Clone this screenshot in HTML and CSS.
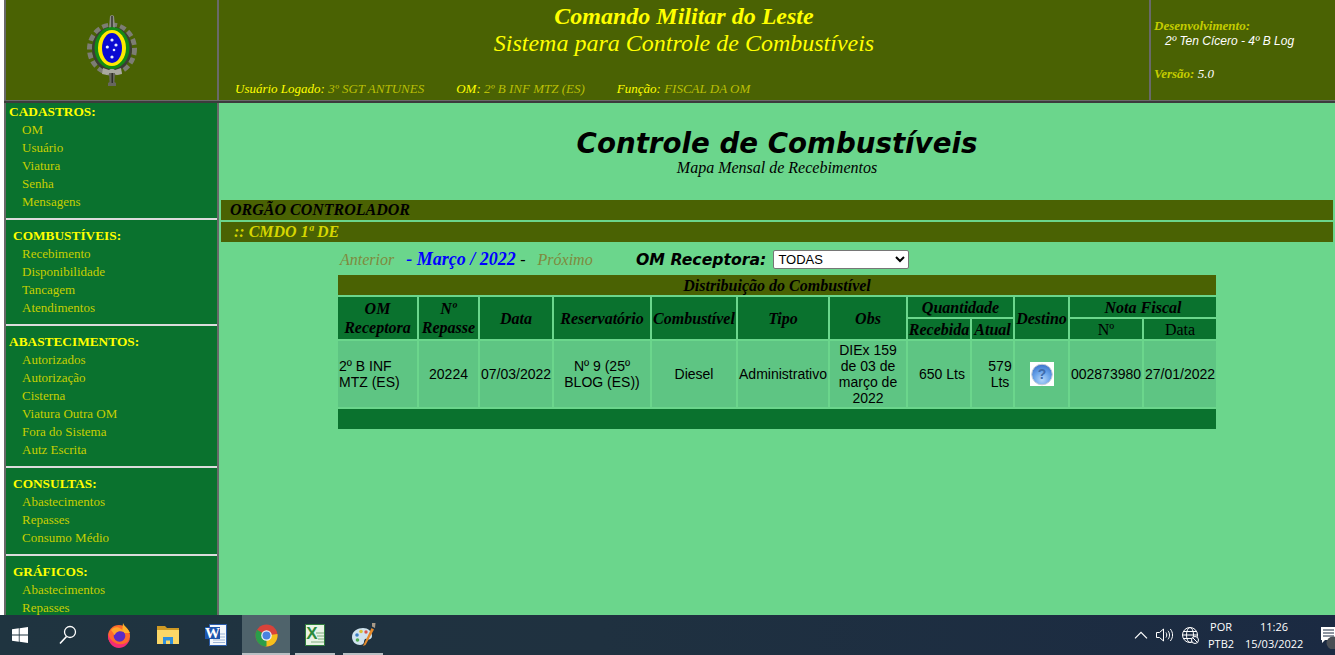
FILE: index.html
```html
<!DOCTYPE html>
<html lang="pt-BR">
<head>
<meta charset="utf-8">
<title>Controle de Combustíveis</title>
<link rel="stylesheet" href="styles.css">
</head>
<body>
<div class="desktop">
  <header class="top">
    <div class="logo-cell">
      <svg class="crest" width="52" height="72" viewBox="0 0 52 72" aria-hidden="true">
        <ellipse cx="26" cy="34" rx="22.500" ry="24" fill="none" stroke="#7d7d74" stroke-width="5" stroke-dasharray="6 3"/>
        <ellipse cx="26" cy="34" rx="20" ry="22.500" fill="#3c3c33"/>
        <path d="M24 1l2-1 2 1 1 12h-6z" fill="#8f8f86"/>
        <path d="M25.300 1h1.400v12h-1.400z" fill="#2e2e28"/>
        <path d="M17 53l6 2 3-2 3 2 6-2 1 6-5 1-3-1h-4l-3 1-5-1z" fill="#a9a9a0"/>
        <path d="M23 58h6l-.5 9 1.500 1v3h-8v-3l1.500-1z" fill="#66665e"/>
        <path d="M25.500 58h1.500v10h-1.500z" fill="#2e2e28"/>
        <ellipse cx="26" cy="33" rx="17.500" ry="21" fill="#148a14"/>
        <ellipse cx="26" cy="33" rx="14" ry="18" fill="#ffe900"/>
        <ellipse cx="26" cy="33" rx="10" ry="15" fill="#0a0ad2"/>
        <g fill="#e4eaff">
          <circle cx="26" cy="25" r="1.600"/><circle cx="30" cy="30" r="1.600"/><circle cx="21.300" cy="32" r="1.600"/><circle cx="28" cy="35" r="1.300"/><circle cx="26" cy="42" r="1.600"/>
        </g>
      </svg>
    </div>
    <div class="title-cell">
      <h1 class="title-main">Comando Militar do Leste</h1>
      <p class="title-sub">Sistema para Controle de Combustíveis</p>
      <p class="session">
        <span class="session-item"><b>Usuário Logado:</b> 3º SGT ANTUNES</span>
        <span class="session-item"><b>OM:</b> 2º B INF MTZ (ES)</span>
        <span class="session-item"><b>Função:</b> FISCAL DA OM</span>
      </p>
    </div>
    <div class="dev-cell">
      <p class="dev-label">Desenvolvimento:</p>
      <p class="dev-name">2º Ten Cícero - 4º B Log</p>
      <p class="version"><b>Versão:</b> <span>5.0</span></p>
    </div>
  </header>
  <div class="main">
    <nav class="menu">
      <section class="menu-group first">
        <h2 class="menu-title">CADASTROS:</h2>
        <a class="menu-link">OM</a><a class="menu-link">Usuário</a><a class="menu-link">Viatura</a><a class="menu-link">Senha</a><a class="menu-link">Mensagens</a>
      </section>
      <section class="menu-group">
        <h2 class="menu-title indent">COMBUSTÍVEIS:</h2>
        <a class="menu-link">Recebimento</a><a class="menu-link">Disponibilidade</a><a class="menu-link">Tancagem</a><a class="menu-link">Atendimentos</a>
      </section>
      <section class="menu-group">
        <h2 class="menu-title">ABASTECIMENTOS:</h2>
        <a class="menu-link">Autorizados</a><a class="menu-link">Autorização</a><a class="menu-link">Cisterna</a><a class="menu-link">Viatura Outra OM</a><a class="menu-link">Fora do Sistema</a><a class="menu-link">Autz Escrita</a>
      </section>
      <section class="menu-group">
        <h2 class="menu-title indent">CONSULTAS:</h2>
        <a class="menu-link">Abastecimentos</a><a class="menu-link">Repasses</a><a class="menu-link">Consumo Médio</a>
      </section>
      <section class="menu-group last">
        <h2 class="menu-title indent">GRÁFICOS:</h2>
        <a class="menu-link">Abastecimentos</a><a class="menu-link">Repasses</a>
      </section>
    </nav>
    <main class="content">
      <h2 class="page-title">Controle de Combustíveis</h2>
      <p class="page-sub">Mapa Mensal de Recebimentos</p>
      <div class="org-bar dark">ORGÃO CONTROLADOR</div>
      <div class="org-bar gold">&nbsp;:: CMDO 1ª DE</div>
      <div class="filters">
        <div class="period">
          <a class="nav-link prev">Anterior</a>
          <span class="month"><b>- Março / 2022</b> <i>-</i></span>
          <a class="nav-link">Próximo</a>
        </div>
        <label class="om-filter">OM Receptora:
          <select class="om-select"><option>TODAS</option></select>
        </label>
      </div>
      <table class="map">
        <colgroup>
          <col class="c1"><col class="c2"><col class="c3"><col class="c4"><col class="c5"><col class="c6"><col class="c7"><col class="c8"><col class="c9"><col class="c10"><col class="c11"><col class="c12">
        </colgroup>
        <thead>
          <tr class="r-cap"><th colspan="12" class="cap">Distribuição do Combustível</th></tr>
          <tr class="r-h1">
            <th rowspan="2">OM<br>Receptora</th>
            <th rowspan="2">Nº<br>Repasse</th>
            <th rowspan="2">Data</th>
            <th rowspan="2">Reservatório</th>
            <th rowspan="2">Combustível</th>
            <th rowspan="2">Tipo</th>
            <th rowspan="2">Obs</th>
            <th colspan="2">Quantidade</th>
            <th rowspan="2">Destino</th>
            <th colspan="2">Nota Fiscal</th>
          </tr>
          <tr class="r-h2">
            <th>Recebida</th>
            <th>Atual</th>
            <th class="plain">Nº</th>
            <th class="plain">Data</th>
          </tr>
        </thead>
        <tbody>
          <tr>
            <td class="left">2º B INF<br>MTZ (ES)</td>
            <td>20224</td>
            <td>07/03/2022</td>
            <td>Nº 9 (25º<br>BLOG (ES))</td>
            <td>Diesel</td>
            <td>Administrativo</td>
            <td>DIEx 159<br>de 03 de<br>março de<br>2022</td>
            <td class="qty-in">650 Lts</td>
            <td class="qty-now">579<br>Lts</td>
            <td>
              <span class="help"><svg width="24" height="24" viewBox="0 0 24 24" aria-hidden="true">
                <defs><radialGradient id="orb" cx="50%" cy="75%" r="70%"><stop offset="0" stop-color="#b5d6f8"/><stop offset=".55" stop-color="#6aa4ea"/><stop offset="1" stop-color="#3f78cf"/></radialGradient></defs>
                <circle cx="12" cy="12.500" r="10.300" fill="url(#orb)" stroke="#c3ccd6" stroke-width="1"/>
                <text x="12" y="17" text-anchor="middle" class="help-mark">?</text>
              </svg></span>
            </td>
            <td>002873980</td>
            <td>27/01/2022</td>
          </tr>
        </tbody>
        <tfoot><tr class="r-foot"><td colspan="12"></td></tr></tfoot>
      </table>
    </main>
  </div>
  <footer class="taskbar">
    <div class="task-apps">
      <span class="task win"><svg width="16" height="16" viewBox="0 0 16 16"><path fill="#fff" d="M0 2.300l6.800-1v6.300H0zM7.600 1.200L16 0v7.600H7.600zM0 8.400h6.800v6.300l-6.800-1zM7.600 8.400H16V16l-8.400-1.200z"/></svg></span>
      <span class="task search"><svg width="18" height="20" viewBox="0 0 18 20" fill="none" stroke="#fff" stroke-width="1.300"><circle cx="11" cy="7" r="5.500"/><path d="M7.500 11.500L1 18.500" stroke-width="1.600"/></svg></span>
      <span class="task firefox"><svg width="24" height="26" viewBox="0 0 24 26"><circle cx="12" cy="14" r="11" fill="#ff6a2b"/><path d="M16 1c1 3 5 5 7 10l-8 0z" fill="#ffb32b"/><path d="M1 11c1 8 10 14 18 10 2-1 3-3 4-5-1 6-6 10-11 10C6 26 0 20 1 11z" fill="#f42c75"/><circle cx="12.500" cy="14" r="5.800" fill="#5a2bc6"/><path d="M4 8c2-3 7-4 10-1 1 1 3 1 3 3-3-1-6-1-8 1-1 1-1 2-2 2 0-2-2-3-3-5z" fill="#ffa52b"/></svg></span>
      <span class="task"><svg width="22" height="18" viewBox="0 0 22 18"><path d="M0 0h8l2 2h12v5H0z" fill="#cf9a24"/><path d="M0 4h22v14H0z" fill="#fbd767"/><path d="M6 11h10v7h-3v-3.500H9V18H6z" fill="#2f8fdc"/></svg></span>
      <span class="task"><svg width="22" height="22" viewBox="0 0 22 22"><path d="M4.500.5h17v21h-17z" fill="#f4f7fb" stroke="#2a5ba8"/><path d="M14 10h6M14 13h6M8 16h12M8 18.500h12" stroke="#9db5d8"/><path d="M0 3h15v12H0z" fill="#1d55ad"/><text x="7.500" y="13.500" text-anchor="middle" class="word-mark">W</text></svg></span>
      <span class="task active"><svg width="23" height="23" viewBox="0 0 24 24"><circle cx="12" cy="12" r="11.500" fill="#d8433a"/><path d="M12 12L23.400 10.500A11.500 11.500 0 0 1 11 23.500z" fill="#f6c01c"/><path d="M12 12L12 23.500A11.500 11.500 0 0 1 2.200 6z" fill="#2a9d4a"/><circle cx="12" cy="12" r="5.500" fill="#f2f2f2"/><circle cx="12" cy="12" r="4.200" fill="#4a82e0"/></svg></span>
      <span class="task open"><svg width="22" height="22" viewBox="0 0 22 22"><path d="M2.500.5h19v21h-19z" fill="#e9f3e6" stroke="#2e7d3c"/><path d="M13 9h8M14 12h7M15 15h6M8 18h13" stroke="#7fae7f"/><text x="9" y="15" text-anchor="middle" class="excel-mark">X</text></svg></span>
      <span class="task open paint"><svg width="24" height="24" viewBox="0 0 24 24"><path d="M0 14C0 8 6 5 11 5s9 3 9 8c0 3-3 4-5 3s-3 1-3 3-2 3-4 3c-4 0-8-3-8-8z" fill="#cfe3ee"/><circle cx="5" cy="12" r="1.800" fill="#3a7fc4"/><circle cx="9" cy="8.500" r="1.800" fill="#d9c136"/><circle cx="5.500" cy="17" r="1.800" fill="#52ad52"/><circle cx="14" cy="9" r="1.700" fill="#d9574f"/><path d="M19.500 5L22 6.500 13.500 22 11 23z" fill="#e58a2a"/><path d="M20 0h3.500l-.5 5-3-1.500z" fill="#a89a88"/></svg></span>
    </div>
    <div class="tray">
      <svg class="tray-icon chevron" width="14" height="8" viewBox="0 0 14 8" fill="none" stroke="#fff" stroke-width="1.200"><path d="M1 7.300L7 1.300l6 6"/></svg>
      <svg class="tray-icon speaker" width="18" height="14" viewBox="0 0 18 14" fill="none" stroke="#fff" stroke-width="1"><path d="M.5 4.500h3L7.500 1v12l-4-3.500h-3z"/><path d="M10 4.500c1 1.500 1 3.500 0 5M12 2.800c2 2.500 2 6 0 8.500M14.300 1c3 3.500 3 8.500 0 12"/></svg>
      <svg class="tray-icon globe" width="17" height="17" viewBox="0 0 17 17" fill="none" stroke="#fff" stroke-width="1"><circle cx="8" cy="8" r="7.500"/><ellipse cx="8" cy="8" rx="3.500" ry="7.500"/><path d="M.5 8h15M1.500 4.500h13M1.500 11.500h13"/><circle cx="13" cy="13" r="3.500" fill="#1b2a42"/><path d="M10.800 10.800l4.400 4.400"/></svg>
      <div class="lang"><span>POR</span><span>PTB2</span></div>
      <div class="clock"><span>11:26</span><span>15/03/2022</span></div>
      <svg class="notif" width="14" height="22" viewBox="0 0 14 22"><path d="M0 0h14v13H4l-3 3v-3H0z" fill="#fff"/><path d="M2 3h11M2 6h11M2 9h11" stroke="#1b2a42"/><circle cx="12" cy="16" r="6.500" fill="#4a4f55"/></svg>
    </div>
  </footer>
</div>
</body>
</html>
```
FILE: styles.css
```css
* { box-sizing: border-box; }
html, body { margin: 0; padding: 0; height: 100%; overflow: hidden; }
body { background: #fff; font-family: "Liberation Serif", serif; }
.desktop { width: 1335px; height: 655px; display: flex; flex-direction: column; overflow: hidden; background: #fff; padding-left: 4px; }

.top { height: 101px; flex: none; display: flex; background: #4a6203; border-left: 2px solid #696969; border-bottom: 1px solid #696969; }
.logo-cell { width: 213px; flex: none; display: flex; align-items: center; justify-content: center; border-right: 2px solid #696969; }
.crest { display: block; margin-top: 2px; }
.title-cell { flex: 1; position: relative; text-align: center; font-style: italic; color: #ffff00; padding-top: 3px; }
.title-main { margin: 0; font-size: 24px; line-height: 26px; font-weight: bold; }
.title-sub { margin: 1px 0 0; font-size: 24px; line-height: 27px; }
.session { position: absolute; left: 16px; top: 82px; margin: 0; font-size: 13px; line-height: 14px; color: #b9bf06; display: flex; gap: 32px; white-space: nowrap; }
.session b { font-weight: normal; color: #ffff00; }
.dev-cell { width: 186px; flex: none; border-left: 2px solid #696969; padding: 19px 0 0 3px; font-style: italic; color: #c4cc00; font-size: 13px; line-height: 14px; }
.dev-cell p { margin: 0; }
.dev-cell .dev-name { color: #fff; font-family: "Liberation Sans", sans-serif; font-size: 12px; margin-top: 1px; padding-left: 11px; }
.dev-cell .version { margin-top: 19px; }
.dev-label { font-weight: bold; }
.version span { color: #fff; }

.main { flex: 1; min-height: 0; display: flex; border-top: 2px solid #3c3c3c; overflow: hidden; }
.menu { width: 215px; flex: none; background: #0a722e; border-left: 2px solid #696969; border-right: 2px solid #696969; overflow: hidden; }
.menu-group { border-bottom: 2px solid #dcdcdc; padding: 7px 0; }
.menu-group.first { padding-top: 0; }
.menu-group.last { border-bottom: 0; }
.menu-title { margin: 0; font-size: 13.330px; line-height: 18px; font-weight: bold; color: #ffff00; padding-left: 3px; }
.menu-title.indent { padding-left: 7px; }
.menu-link { display: block; font-size: 13px; line-height: 18px; color: #c6cf00; padding-left: 16px; }

.content { flex: 1; background: #6bd68c; padding-top: 25px; min-width: 0; }
.page-title { margin: 0; text-align: center; font: italic bold 27.700px/31px "DejaVu Sans", sans-serif; color: #000; }
.page-sub { margin: 0; text-align: center; font-style: italic; font-size: 16px; line-height: 18px; color: #000; }
.org-bar { margin: 0 2px 2px; height: 20px; font-style: italic; font-weight: bold; font-size: 16px; line-height: 20px; padding-left: 9px; background: #4a6203; }
.org-bar.dark { margin-top: 23px; color: #000; }
.org-bar.gold { color: #d6d600; }

.filters { display: flex; align-items: center; margin: 6px 0 0 121px; height: 22px; }
.period { width: 296px; font-style: italic; font-size: 16px; white-space: nowrap; display: flex; align-items: baseline; }
.nav-link { color: #7f8a3e; }
.prev { margin-right: 12px; }
.month { color: #0000ff; font-size: 18px; margin-right: 12px; }
.month i { color: #000; font-size: 16px; }
.om-filter { font: italic bold 15.700px "DejaVu Sans", sans-serif; color: #000; display: flex; align-items: center; gap: 7px; white-space: nowrap; }
.om-select { width: 136px; height: 19px; font: 13px "Liberation Sans", sans-serif; background: #fff; border: 1px solid #767676; border-radius: 2px; }

.map { table-layout: fixed; border-collapse: separate; border-spacing: 2px; width: 882px; margin: 3px 0 0 117px; }
.c1 { width: 79px; } .c2 { width: 59px; } .c3 { width: 72px; } .c4 { width: 96px; } .c5 { width: 84px; } .c6 { width: 90px; } .c7 { width: 76px; } .c8 { width: 62px; } .c9 { width: 41px; } .c10 { width: 53px; } .c11 { width: 72px; } .c12 { width: 72px; }
.map th, .map td { padding: 0; text-align: center; }
.map th { background: #0a722e; font-family: "Liberation Serif", serif; font-style: italic; font-weight: bold; font-size: 16px; line-height: 19px; color: #000; overflow: hidden; white-space: nowrap; }
.map .cap { background: #4a6203; font-size: 16px; height: 20px; }
.r-h1 th { height: 20px; }
.r-h2 th { height: 20px; }
.map th.plain { font-style: normal; font-weight: normal; }
.map td { background: #5ec583; font: 14px/16px "Liberation Sans", sans-serif; color: #000; height: 66px; white-space: nowrap; }
.map td.left { text-align: left; padding-left: 1px; }
.map td.qty-in { padding-left: 6px; }
.map td.qty-now { padding-left: 15px; }
.map .r-foot td { background: #0a722e; height: 20px; }
.help { display: inline-flex; width: 24px; height: 24px; background: #fff; vertical-align: middle; align-items: center; justify-content: center; }
.help-mark { font: bold 14px "Liberation Sans", sans-serif; fill: #3f6bab; }
.word-mark { font: bold 15px "Liberation Serif", serif; fill: #fff; }
.excel-mark { font: bold 17px "Liberation Sans", sans-serif; fill: #2e8b3d; }

.taskbar { height: 40px; flex: none; display: flex; justify-content: space-between; background: linear-gradient(90deg, #1f3440 0%, #1f3140 45%, #1b2a42 100%); margin-left: -4px; color: #fff; font-family: "Open Sans", sans-serif; }
.task-apps { display: flex; }
.task { width: 48px; height: 40px; display: flex; align-items: center; justify-content: center; position: relative; }
.task.win { width: 40px; }
.task.search { width: 56px; }
.task.firefox { padding-right: 2px; }
.task.active { background: #4f636b; margin-left: 2px; }
.task.paint { padding-left: 3px; }
.active::after, .open::after { content: ""; position: absolute; left: 0; right: 0; bottom: 0; height: 2px; background: #b9c0c4; }
.open::after { left: 5px; right: 3px; }
.tray { display: flex; align-items: center; }
.tray-icon { display: block; }
.chevron { margin-right: 8px; }
.speaker { margin-right: 8px; }
.globe { margin-right: 9px; }
.lang, .clock { display: flex; flex-direction: column; text-align: center; font-size: 11px; line-height: 17px; width: 58px; }
.lang { width: 26px; margin-right: 11px; white-space: nowrap; align-items: center; }
.clock { margin-right: 18px; white-space: nowrap; }
.notif { display: block; align-self: flex-end; margin-bottom: 6px; }
```
